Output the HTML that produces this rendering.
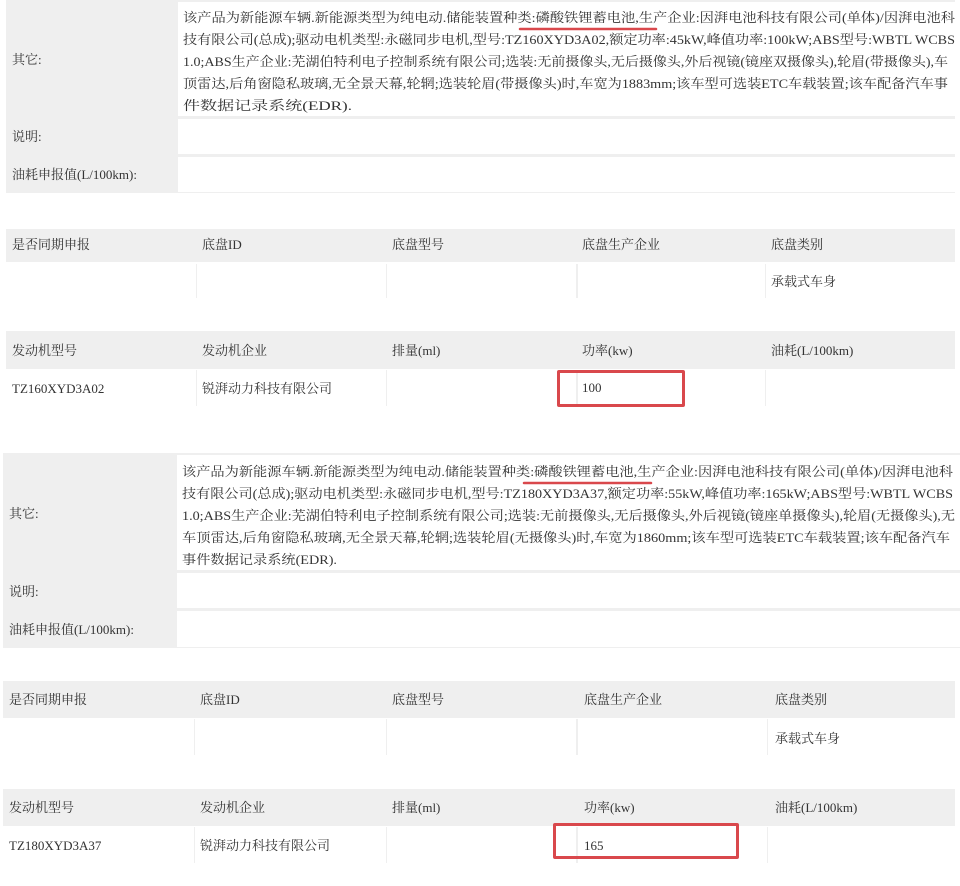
<!DOCTYPE html>
<html><head><meta charset="utf-8"><style>
body{margin:0;width:960px;height:886px;background:#fff;position:relative;overflow:hidden;font-family:"Liberation Serif","Noto Serif CJK SC",serif;font-size:13px;color:#333}
.b{position:absolute}
.g{background:#efefef}
.w{background:#fff}
.t{position:absolute;white-space:nowrap;line-height:16px}
.r{position:absolute;border:3px solid #d9484c;border-radius:2px;box-sizing:border-box}
svg{position:absolute;left:0;top:0}
</style></head><body>
<!-- section 1 -->
<div class="b g" style="left:6px;top:0;width:949px;height:193px"></div>
<div class="b w" style="left:178px;top:2px;width:777px;height:114px"></div>
<div class="b w" style="left:178px;top:119px;width:777px;height:35px"></div>
<div class="b w" style="left:178px;top:157px;width:777px;height:35px"></div>
<div class="t" style="left:12px;top:52px">其它:</div>
<div class="t" style="left:12px;top:129px">说明:</div>
<div class="t" style="left:12px;top:167px">油耗申报值(L/100km):</div>

<div class="b g" style="left:6px;top:229px;width:949px;height:70px"></div>
<div class="b w" style="left:6px;top:262px;width:949px;height:37px"></div>
<div class="b g" style="left:196px;top:264px;width:1px;height:34px"></div>
<div class="b g" style="left:386px;top:264px;width:1px;height:34px"></div>
<div class="b g" style="left:576px;top:264px;width:2px;height:34px"></div>
<div class="b g" style="left:765px;top:264px;width:1px;height:34px"></div>
<div class="t" style="left:12px;top:237px">是否同期申报</div>
<div class="t" style="left:202px;top:237px">底盘ID</div>
<div class="t" style="left:392px;top:237px">底盘型号</div>
<div class="t" style="left:582px;top:237px">底盘生产企业</div>
<div class="t" style="left:771px;top:237px">底盘类别</div>
<div class="t" style="left:771px;top:274px">承载式车身</div>

<div class="b g" style="left:6px;top:331px;width:949px;height:76px"></div>
<div class="b w" style="left:6px;top:369px;width:949px;height:38px"></div>
<div class="b g" style="left:196px;top:370px;width:1px;height:36px"></div>
<div class="b g" style="left:386px;top:370px;width:1px;height:36px"></div>
<div class="b g" style="left:576px;top:370px;width:2px;height:36px"></div>
<div class="b g" style="left:765px;top:370px;width:1px;height:36px"></div>
<div class="t" style="left:12px;top:343px">发动机型号</div>
<div class="t" style="left:202px;top:343px">发动机企业</div>
<div class="t" style="left:392px;top:343px">排量(ml)</div>
<div class="t" style="left:582px;top:343px">功率(kw)</div>
<div class="t" style="left:771px;top:343px">油耗(L/100km)</div>
<div class="t" style="left:12px;top:381px">TZ160XYD3A02</div>
<div class="t" style="left:202px;top:381px">锐湃动力科技有限公司</div>
<div class="t" style="left:582px;top:380px">100</div>
<div class="r" style="left:557px;top:370px;width:128px;height:37px"></div>

<!-- section 2 -->
<div class="b g" style="left:3px;top:453px;width:957px;height:195px"></div>
<div class="b w" style="left:177px;top:455px;width:783px;height:115px"></div>
<div class="b w" style="left:177px;top:573px;width:783px;height:35px"></div>
<div class="b w" style="left:177px;top:611px;width:783px;height:36px"></div>
<div class="t" style="left:9px;top:506px">其它:</div>
<div class="t" style="left:9px;top:584px">说明:</div>
<div class="t" style="left:9px;top:622px">油耗申报值(L/100km):</div>

<div class="b g" style="left:3px;top:681px;width:952px;height:75px"></div>
<div class="b w" style="left:3px;top:718px;width:952px;height:38px"></div>
<div class="b g" style="left:194px;top:719px;width:1px;height:36px"></div>
<div class="b g" style="left:386px;top:719px;width:1px;height:36px"></div>
<div class="b g" style="left:576px;top:719px;width:2px;height:36px"></div>
<div class="b g" style="left:767px;top:719px;width:1px;height:36px"></div>
<div class="t" style="left:9px;top:692px">是否同期申报</div>
<div class="t" style="left:200px;top:692px">底盘ID</div>
<div class="t" style="left:392px;top:692px">底盘型号</div>
<div class="t" style="left:584px;top:692px">底盘生产企业</div>
<div class="t" style="left:775px;top:692px">底盘类别</div>
<div class="t" style="left:775px;top:731px">承载式车身</div>

<div class="b g" style="left:3px;top:789px;width:952px;height:75px"></div>
<div class="b w" style="left:3px;top:826px;width:952px;height:38px"></div>
<div class="b g" style="left:194px;top:827px;width:1px;height:36px"></div>
<div class="b g" style="left:386px;top:827px;width:1px;height:36px"></div>
<div class="b g" style="left:576px;top:827px;width:2px;height:36px"></div>
<div class="b g" style="left:767px;top:827px;width:1px;height:36px"></div>
<div class="t" style="left:9px;top:800px">发动机型号</div>
<div class="t" style="left:200px;top:800px">发动机企业</div>
<div class="t" style="left:392px;top:800px">排量(ml)</div>
<div class="t" style="left:584px;top:800px">功率(kw)</div>
<div class="t" style="left:775px;top:800px">油耗(L/100km)</div>
<div class="t" style="left:9px;top:838px">TZ180XYD3A37</div>
<div class="t" style="left:200px;top:838px">锐湃动力科技有限公司</div>
<div class="t" style="left:584px;top:838px">165</div>
<div class="r" style="left:553px;top:823px;width:186px;height:36px"></div>

<svg width="960" height="886" font-family="Liberation Serif, Noto Serif CJK SC, serif" font-size="13" fill="#333">
<g lengthAdjust="spacingAndGlyphs">
<text x="183" y="22" textLength="772" lengthAdjust="spacingAndGlyphs">该产品为新能源车辆.新能源类型为纯电动.储能装置种类:磷酸铁锂蓄电池,生产企业:因湃电池科技有限公司(单体)/因湃电池科</text>
<text x="183" y="44" textLength="772" lengthAdjust="spacingAndGlyphs">技有限公司(总成);驱动电机类型:永磁同步电机,型号:TZ160XYD3A02,额定功率:45kW,峰值功率:100kW;ABS型号:WBTL WCBS</text>
<text x="183" y="66" textLength="765" lengthAdjust="spacingAndGlyphs">1.0;ABS生产企业:芜湖伯特利电子控制系统有限公司;选装:无前摄像头,无后摄像头,外后视镜(镜座双摄像头),轮眉(带摄像头),车</text>
<text x="183" y="88" textLength="765" lengthAdjust="spacingAndGlyphs">顶雷达,后角窗隐私玻璃,无全景天幕,轮辋;选装轮眉(带摄像头)时,车宽为1883mm;该车型可选装ETC车载装置;该车配备汽车事</text>
<text x="183" y="110" textLength="169" lengthAdjust="spacingAndGlyphs">件数据记录系统(EDR).</text>

<text x="182" y="476" textLength="771" lengthAdjust="spacingAndGlyphs">该产品为新能源车辆.新能源类型为纯电动.储能装置种类:磷酸铁锂蓄电池,生产企业:因湃电池科技有限公司(单体)/因湃电池科</text>
<text x="182" y="498" textLength="771" lengthAdjust="spacingAndGlyphs">技有限公司(总成);驱动电机类型:永磁同步电机,型号:TZ180XYD3A37,额定功率:55kW,峰值功率:165kW;ABS型号:WBTL WCBS</text>
<text x="182" y="520" textLength="773" lengthAdjust="spacingAndGlyphs">1.0;ABS生产企业:芜湖伯特利电子控制系统有限公司;选装:无前摄像头,无后摄像头,外后视镜(镜座单摄像头),轮眉(无摄像头),无</text>
<text x="182" y="542" textLength="768" lengthAdjust="spacingAndGlyphs">车顶雷达,后角窗隐私玻璃,无全景天幕,轮辋;选装轮眉(无摄像头)时,车宽为1860mm;该车型可选装ETC车载装置;该车配备汽车</text>
<text x="182" y="564" textLength="155" lengthAdjust="spacingAndGlyphs">事件数据记录系统(EDR).</text>
</g>
<line x1="520" y1="29" x2="656" y2="29" stroke="#d9484c" stroke-width="2.5" stroke-linecap="round"/>
<line x1="524" y1="483" x2="651" y2="483" stroke="#d9484c" stroke-width="2.5" stroke-linecap="round"/>
</svg>
</body></html>
